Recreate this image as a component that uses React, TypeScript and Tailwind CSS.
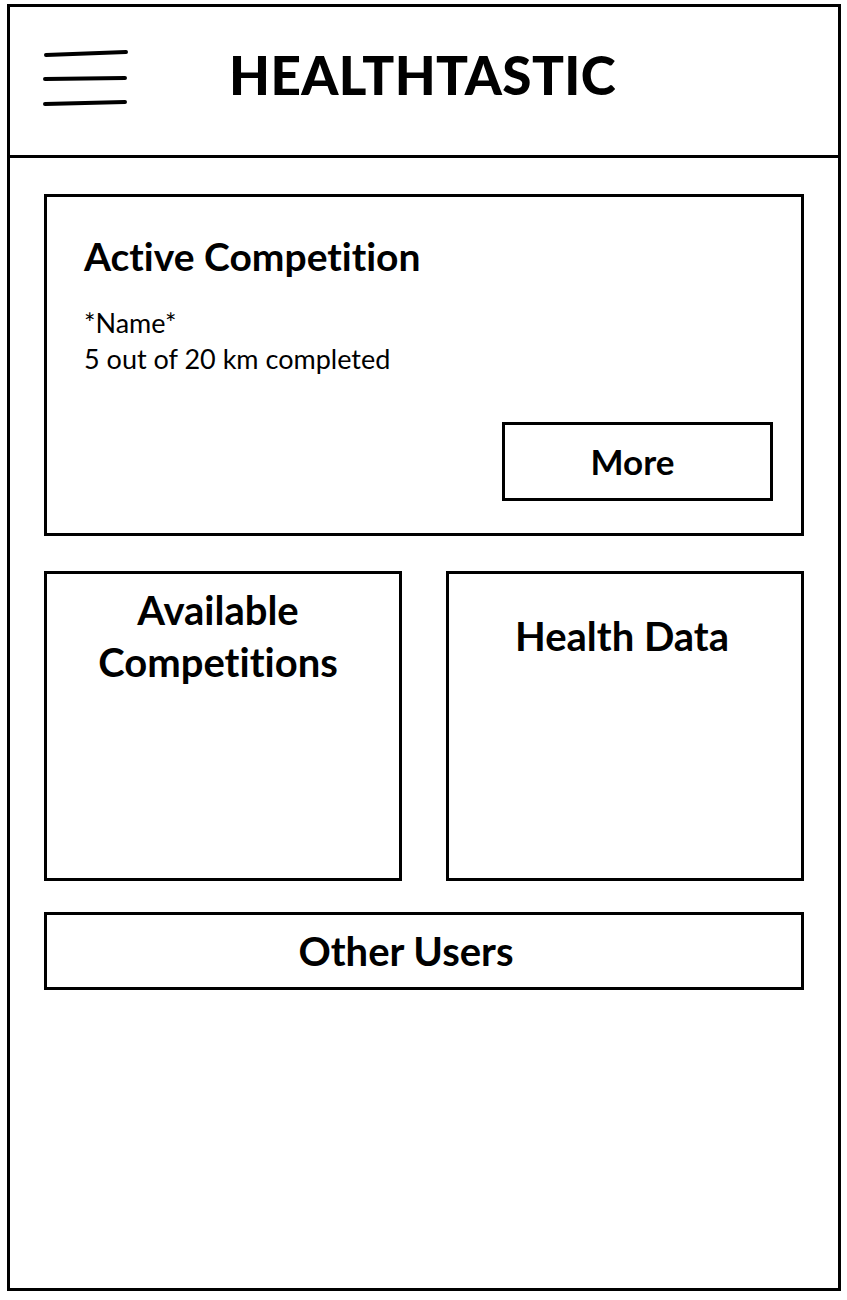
import { Fragment } from 'react'

const font = { fontFamily: 'Lato, "Open Sans", sans-serif' }

function MenuIcon() {
  return (
    <svg width="90" height="64" viewBox="0 0 90 64" fill="none" stroke="black" strokeWidth="4" strokeLinecap="round">
      <path d="M3 6 L83 3" />
      <path d="M2 30 L82 29" />
      <path d="M2 55 L82 53" />
    </svg>
  )
}

export default function App() {
  return (
    <div className="min-h-screen bg-white [font-variant-ligatures:none]" style={font}>
      {/* Phone frame */}
      <div className="ml-[7px] mt-[4px] w-[834px] h-[1287px] border-[3px] border-black flex flex-col">

        {/* Header */}
        <header className="h-[151px] border-b-[3px] border-black flex items-center pl-[33px]">
          <MenuIcon />
          <h1 className="ml-[96px] -mt-[14px] text-[53px] font-black tracking-[0.4px] text-black leading-none">HEALTHTASTIC</h1>
        </header>

        {/* Main */}
        <main className="flex flex-col px-[34px] pt-[36px] gap-[35px]">

          {/* Active competition */}
          <section className="h-[342px] border-[3px] border-black flex flex-col pl-[37px] pr-[28px] pt-[40px]">
            <h2 className="text-[39px] font-bold text-black leading-none">Active Competition</h2>
            <p className="mt-[29px] text-[27px] leading-[36px] text-black">
              {['*Name*', '5 out of 20 km completed'].map((line) => (
                <Fragment key={line}>
                  {line}
                  <br />
                </Fragment>
              ))}
            </p>
            <div className="mt-auto mb-[32px] flex justify-end">
              <button className="w-[271px] h-[79px] border-[3px] border-black flex items-center justify-center pr-[10px] text-[35px] font-bold text-black">
                More
              </button>
            </div>
          </section>

          {/* Two tiles */}
          <div className="flex justify-between">
            <section className="w-[358px] h-[310px] border-[3px] border-black flex flex-col items-center pt-[10px] pr-[10px]">
              <h2 className="text-[40px] font-bold text-black text-center leading-[52px]">
                Available
                <br />
                Competitions
              </h2>
            </section>
            <section className="w-[358px] h-[310px] border-[3px] border-black flex flex-col items-center pt-[36px] pr-[6px]">
              <h2 className="text-[40px] font-bold text-black leading-[52px]">Health Data</h2>
            </section>
          </div>

          {/* Other users */}
          <section className="-mt-[4px] h-[78px] border-[3px] border-black flex items-center justify-center pr-[36px]">
            <h2 className="text-[40px] font-bold text-black leading-none">Other Users</h2>
          </section>
        </main>
      </div>
    </div>
  )
}
